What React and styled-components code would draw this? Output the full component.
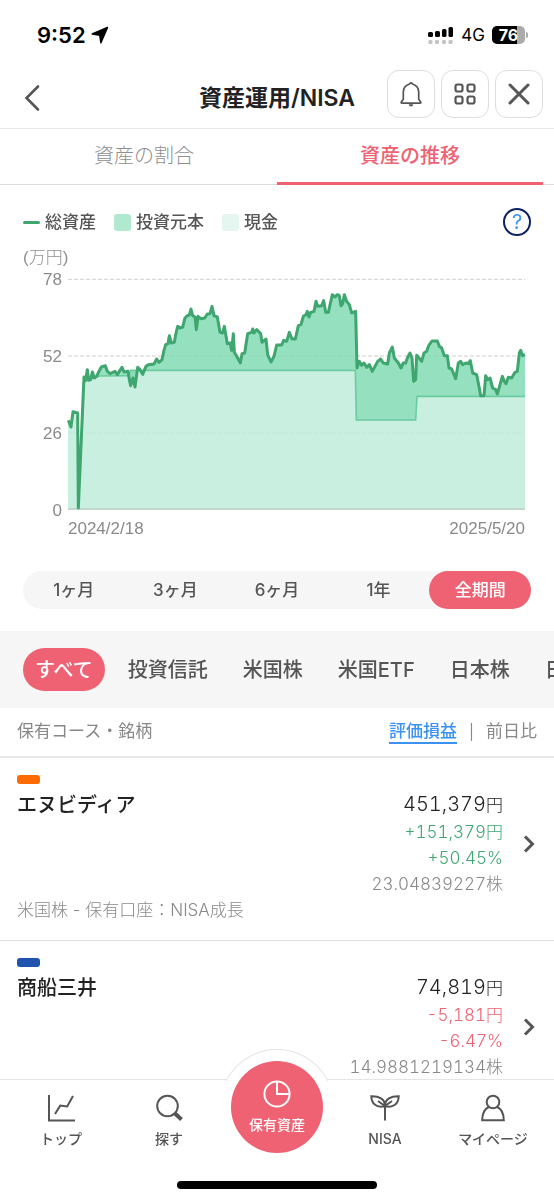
import React, { useState } from 'react';
import styled, { createGlobalStyle } from 'styled-components';

const TOTAL = [
  [1, 424], [9, 444], [15, 398], [29, 402], [31, 687], [45, 362], [48, 294], [53, 304], [58, 272], [62, 304],
  [68, 302], [73, 279], [79, 297], [86, 292], [92, 279], [100, 264], [112, 260], [118, 277], [126, 284],
  [141, 277], [148, 287], [156, 274], [162, 265], [168, 279], [180, 277], [184, 302], [188, 320], [195, 297],
  [201, 324], [206, 287], [209, 265], [216, 272], [224, 286], [234, 262], [241, 257], [258, 255], [266, 240],
  [273, 250], [282, 242], [288, 214], [293, 197], [300, 194], [304, 170], [310, 192], [319, 190], [324, 162],
  [329, 142], [336, 147], [344, 144], [351, 117], [358, 110], [364, 108], [369, 90], [374, 110], [381, 114],
  [385, 152], [390, 112], [398, 119], [410, 117], [418, 105], [426, 104], [432, 82], [438, 110], [448, 114],
  [456, 160], [464, 162], [469, 142], [478, 194], [486, 192], [491, 214], [496, 164], [499, 220], [506, 232],
  [517, 252], [522, 224], [530, 222], [539, 164], [551, 160], [554, 150], [558, 162], [566, 152], [578, 164],
  [582, 190], [594, 180], [599, 227], [609, 249], [618, 232], [626, 198], [641, 198], [647, 184], [656, 187],
  [664, 160], [672, 180], [682, 180], [691, 140], [699, 137], [706, 112], [714, 107], [718, 97], [723, 114],
  [728, 100], [738, 97], [744, 67], [749, 82], [761, 80], [767, 65], [773, 100], [781, 100], [793, 47],
  [801, 54], [808, 47], [814, 50], [819, 80], [824, 74], [829, 47], [836, 67], [844, 77], [851, 102],
  [863, 97], [867, 267], [874, 247], [881, 259], [888, 252], [896, 265], [904, 257], [913, 277], [921, 262],
  [929, 247], [938, 240], [946, 252], [959, 255], [964, 222], [973, 204], [979, 237], [991, 252], [999, 267],
  [1006, 252], [1013, 252], [1018, 237], [1026, 222], [1032, 237], [1037, 307], [1043, 302], [1046, 229],
  [1053, 237], [1061, 247], [1068, 222], [1076, 217], [1082, 200], [1092, 186], [1108, 186], [1114, 202],
  [1121, 207], [1129, 230], [1138, 230], [1143, 267], [1151, 270], [1163, 299], [1171, 252], [1178, 247],
  [1184, 257], [1194, 252], [1201, 254], [1207, 245], [1214, 282], [1226, 287], [1231, 312], [1238, 350],
  [1248, 350], [1253, 290], [1259, 302], [1266, 297], [1274, 327], [1283, 332], [1288, 345], [1296, 317],
  [1303, 292], [1309, 307], [1314, 314], [1321, 295], [1331, 297], [1341, 280], [1348, 277], [1354, 222],
  [1358, 214], [1364, 230], [1371, 227],
];

const PRINCIPAL = [
  [0, 424], [9, 444], [15, 398], [29, 402], [31, 687], [48, 304], [96, 291], [182, 290], [188, 274],
  [862, 274], [865, 423], [1043, 423], [1047, 352], [1371, 352],
];

const TICKS = [78, 52, 26, 0];
const PERIODS = ['1ヶ月', '3ヶ月', '6ヶ月', '1年', '全期間'];
const FILTERS = ['すべて', '投資信託', '米国株', '米国ETF', '日本株', '日本ETF'];

const HOLDINGS = [
  {
    name: 'エヌビディア',
    tag: '#ff6a00',
    value: '451,379',
    diff: '+151,379',
    rate: '+50.45%',
    shares: '23.04839227',
    account: '米国株 - 保有口座：NISA成長',
  },
  {
    name: '商船三井',
    tag: '#1f53ae',
    value: '74,819',
    diff: '-5,181',
    rate: '-6.47%',
    shares: '14.9881219134',
  },
];

const toPoints = (list) => list.map((p) => p.join(',')).join(' ');

const StatusBar = () => (
  <Status>
    <Clock>
      9:52
      <svg width="18" height="18" viewBox="0 0 18 18">
        <path d="M16.500 1.500 1.200 8 8.800 9.300 9.900 16.800Z" fill="#000" stroke="#000" strokeWidth="1.500" strokeLinejoin="round" />
      </svg>
    </Clock>
    <Signals>
      <svg width="26" height="18" viewBox="0 0 26 18">
        <g fill="#000">
          <rect x="0" y="6" width="5" height="5" rx="1.5" />
          <rect x="7" y="5" width="5" height="6" rx="1.5" />
          <rect x="14" y="3" width="4.5" height="8" rx="1.5" />
          <rect x="20.5" y="1" width="4.5" height="10" rx="1.5" />
        </g>
        <g fill="#c4c4c4">
          <rect x="0.5" y="14" width="4" height="4" rx="1.2" />
          <rect x="7" y="14" width="4" height="4" rx="1.2" />
          <rect x="14" y="14" width="4" height="4" rx="1.2" />
          <rect x="20.5" y="14" width="4" height="4" rx="1.2" />
        </g>
      </svg>
      <span>4G</span>
      <Battery><span>76</span></Battery>
    </Signals>
  </Status>
);

const Chart = () => (
  <ChartGrid>
    <Axis>
      {TICKS.map((t) => <span key={t}>{t}</span>)}
    </Axis>
    <Plot viewBox="0 0 1371 693" preserveAspectRatio="none" role="img" aria-label="資産の推移">
      {[1, 231, 462].map((y) => (
        <line key={y} x1="0" x2="1371" y1={y} y2={y} stroke="#cfcfcf" strokeWidth="1" strokeDasharray="4 2" />
      ))}
      <polygon points={`0,693 ${toPoints(PRINCIPAL)} 1371,693`} fill="#beecda" fillOpacity="0.85" />
      <polygon
        points={`${toPoints(TOTAL.slice(6))} ${toPoints(PRINCIPAL.slice(5).reverse())}`}
        fill="#82dbb4"
        fillOpacity="0.85"
      />
      <polyline points={toPoints(PRINCIPAL.slice(5))} stroke="#6ccba1" strokeWidth="1.6" />
      <line x1="0" x2="1371" y1="690" y2="690" stroke="#bdbdbd" strokeWidth="1" />
      <polyline points={toPoints(TOTAL)} stroke="#40a670" strokeWidth="3" strokeLinejoin="round" />
    </Plot>
    <Dates>
      <span>2024/2/18</span>
      <span>2025/5/20</span>
    </Dates>
  </ChartGrid>
);

const Holding = ({ item }) => (
  <HoldingItem>
    <HoldingLink href="#detail">
      <Tag $color={item.tag} />
      <HoldingMain>
        <Name>{item.name}</Name>
        <Values $down={item.diff.startsWith('-')}>
          <div className="value">{item.value}<small>円</small></div>
          <div>{item.diff}<small>円</small></div>
          <div>{item.rate}</div>
          <div className="shares">{item.shares}<small>株</small></div>
        </Values>
        <svg width="12" height="18" viewBox="0 0 12 18" fill="none" stroke="#555" strokeWidth="3">
          <path d="M2 1.5 9.5 9 2 16.5" />
        </svg>
      </HoldingMain>
      {item.account && <Account>{item.account}</Account>}
    </HoldingLink>
  </HoldingItem>
);

const BottomNav = () => (
  <Nav>
    <Bump />
    <NavItems>
      <NavLink href="#top">
        <svg width="28" height="28" viewBox="0 0 28 28">
          <path d="M2 1v25.5h26M8 20l5.2-8.4 7 .9L26 2" />
        </svg>
        トップ
      </NavLink>
      <NavLink href="#search">
        <svg width="28" height="28" viewBox="0 0 28 28">
          <circle cx="12.5" cy="12" r="10.3" />
          <path d="m20 19.5 6.5 6" strokeWidth="4" />
        </svg>
        探す
      </NavLink>
      <CenterLink href="#assets">
        <svg width="28" height="28" viewBox="0 0 28 28">
          <circle cx="14" cy="14" r="12.6" />
          <path d="M14 1.4V14h12.6" />
        </svg>
        保有資産
      </CenterLink>
      <NavLink href="#nisa">
        <svg width="30" height="28" viewBox="0 0 30 28">
          <path d="M15 12v14.5M15 12C15 5 9 2 1.3 2.2 1.5 9.5 6.5 14.5 15 12ZM15 12c0-7 6-10 13.7-9.8C28.5 9.5 23.5 14.5 15 12ZM8 7l7 5 7-5" />
        </svg>
        NISA
      </NavLink>
      <NavLink href="#mypage">
        <svg width="28" height="28" viewBox="0 0 28 28">
          <circle cx="14" cy="8" r="6.3" />
          <path d="M9.8 13C5.5 15 3.2 19 3.2 26.3h21.6C24.8 19 22.5 15 18.2 13" />
        </svg>
        マイページ
      </NavLink>
    </NavItems>
    <HomeIndicator />
  </Nav>
);

const App = () => {
  const [tab, setTab] = useState(1);
  const [period, setPeriod] = useState('全期間');
  const [filter, setFilter] = useState('すべて');

  return (
    <>
      <GlobalStyle />
      <Screen>
        <StatusBar />
        <Header>
          <BackButton aria-label="戻る">
            <svg width="16" height="28" viewBox="0 0 16 28" fill="none" stroke="#555" strokeWidth="2.6" strokeLinecap="round">
              <path d="M14 2.5 2.5 14 14 25.5" />
            </svg>
          </BackButton>
          <h1>資産運用/NISA</h1>
          <Actions>
            <SquareButton aria-label="お知らせ">
              <svg width="24" height="26" viewBox="0 0 24 26" strokeWidth="1.7">
                <path d="M12 1.8c.9 0 1.2.8 1.6 1.2 3.6 1.2 6.1 3.9 6.1 8v7.2l2 2.8c.4.7.1 1.2-.7 1.2H3c-.8 0-1.1-.5-.7-1.2l2-2.8V11c0-4.1 2.5-6.8 6.1-8 .4-.4.7-1.2 1.6-1.2Z" />
                <path d="M10.2 23.8c.5 1.6 3.1 1.6 3.6 0Z" fill="#555" strokeWidth="1" />
              </svg>
            </SquareButton>
            <SquareButton aria-label="メニュー">
              <svg width="22" height="22" viewBox="0 0 22 22" strokeWidth="2.2">
                <rect x="1.5" y="1.5" width="7" height="7" rx="2" />
                <rect x="13.5" y="1.5" width="7" height="7" rx="2" />
                <rect x="1.5" y="13.5" width="7" height="7" rx="2" />
                <rect x="13.5" y="13.5" width="7" height="7" rx="2" />
              </svg>
            </SquareButton>
            <SquareButton aria-label="閉じる">
              <svg width="22" height="22" viewBox="0 0 22 22" strokeWidth="3" strokeLinecap="round">
                <path d="m2 2 18 18M20 2 2 20" />
              </svg>
            </SquareButton>
          </Actions>
        </Header>
        <Tabs>
          {['資産の割合', '資産の推移'].map((label, i) => (
            <Tab key={label} $active={tab === i} onClick={() => setTab(i)}>{label}</Tab>
          ))}
        </Tabs>
        <Content>
          <ChartSection>
            <LegendRow>
              <Legend><LineMark /><span>総資産</span></Legend>
              <Legend><Swatch $color="#b0e9d0" /><span>投資元本</span></Legend>
              <Legend><Swatch $color="#e4f6ef" /><span>現金</span></Legend>
              <HelpButton aria-label="ヘルプ">?</HelpButton>
            </LegendRow>
            <Unit>(万円)</Unit>
            <Chart />
            <Periods>
              {PERIODS.map((p) => (
                <PeriodButton key={p} $active={p === period} onClick={() => setPeriod(p)}>{p}</PeriodButton>
              ))}
            </Periods>
          </ChartSection>
          <Filters>
            {FILTERS.map((f) => (
              <FilterButton key={f} $active={f === filter} onClick={() => setFilter(f)}>{f}</FilterButton>
            ))}
          </Filters>
          <ListHead>
            <span>保有コース・銘柄</span>
            <Sorts>
              <SortButton $active>評価損益</SortButton>
              <Divider>|</Divider>
              <SortButton>前日比</SortButton>
            </Sorts>
          </ListHead>
          <HoldingList>
            {HOLDINGS.map((item) => <Holding key={item.name} item={item} />)}
          </HoldingList>
        </Content>
        <BottomNav />
      </Screen>
    </>
  );
};

export default App;

const GlobalStyle = createGlobalStyle`
  * {
    box-sizing: border-box;
  }
  body {
    margin: 0;
    background: #fff;
    color: #222;
    font-family: Inter, 'Noto Sans CJK JP', sans-serif;
  }
  button {
    border: 0;
    padding: 0;
    background: none;
    color: inherit;
    font: inherit;
    cursor: pointer;
  }
  a {
    color: inherit;
    text-decoration: none;
  }
  svg {
    display: block;
    flex-shrink: 0;
  }
`;

const Screen = styled.div`
  display: flex;
  flex-direction: column;
  height: 100vh;
`;

const Status = styled.div`
  flex-shrink: 0;
  height: 70px;
  padding: 0 29px 0 37px;
  display: flex;
  justify-content: space-between;
  align-items: center;
  color: #000;
`;

const Clock = styled.div`
  display: flex;
  align-items: center;
  gap: 5px;
  font-size: 22px;
  font-weight: 600;
`;

const Signals = styled.div`
  display: flex;
  align-items: center;
  gap: 7px;
  font-size: 17px;
`;

const Battery = styled.div`
  position: relative;
  width: 33px;
  height: 18px;
  border-radius: 5px;
  background: linear-gradient(to right, #000 76%, #ababab 76%);
  color: #fff;
  font-size: 16px;
  font-weight: 700;
  line-height: 18px;
  text-align: center;
  &::after {
    content: '';
    position: absolute;
    top: 6px;
    right: -3px;
    width: 2px;
    height: 6px;
    border-radius: 0 2px 2px 0;
    background: #ababab;
  }
`;

const Header = styled.header`
  flex-shrink: 0;
  height: 59px;
  padding: 0 11px 10px;
  display: grid;
  grid-template-columns: 1fr auto 1fr;
  align-items: center;
  border-bottom: 1px solid #e9e9e9;
  h1 {
    margin: 0;
    padding-top: 8px;
    font-size: 23px;
    font-weight: 600;
    line-height: 32px;
  }
`;

const BackButton = styled.button`
  justify-self: start;
  padding: 8px 13px 0;
`;

const Actions = styled.div`
  justify-self: end;
  display: flex;
  gap: 6px;
`;

const SquareButton = styled.button`
  width: 48px;
  height: 48px;
  display: flex;
  align-items: center;
  justify-content: center;
  border: 1px solid #dedede;
  border-radius: 12px;
  svg {
    fill: none;
    stroke: #555;
  }
`;

const Tabs = styled.div`
  flex-shrink: 0;
  display: flex;
  height: 56px;
  padding: 0 11px;
  box-shadow: inset 0 -1px #dcdcdc;
`;

const Tab = styled.button`
  flex: 1;
  padding-bottom: 3px;
  border-bottom: 3px solid ${(p) => (p.$active ? '#ee6273' : 'transparent')};
  color: ${(p) => (p.$active ? '#ee6273' : '#8f8f8f')};
  font-size: 20px;
  font-weight: ${(p) => (p.$active ? 500 : 300)};
`;

const Content = styled.main`
  flex: 1;
  min-height: 0;
  overflow-x: hidden;
  overflow-y: auto;
  scrollbar-width: none;
`;

const ChartSection = styled.section`
  padding: 22px 23px;
`;

const LegendRow = styled.div`
  display: flex;
  align-items: center;
  gap: 18px;
  height: 30px;
  color: #555;
  font-size: 17px;
  font-weight: 500;
`;

const Legend = styled.div`
  display: flex;
  align-items: center;
  gap: 5px;
  height: 30px;
  span:last-child {
    padding-bottom: 4px;
  }
`;

const LineMark = styled.span`
  width: 17px;
  height: 3px;
  border-radius: 2px;
  background: #40a670;
`;

const Swatch = styled.span`
  width: 17px;
  height: 17px;
  border-radius: 3px;
  background: ${(p) => p.$color};
`;

const HelpButton = styled.button`
  width: 28px;
  height: 28px;
  margin-left: auto;
  border: 2px solid #0b2161;
  border-radius: 50%;
  color: #3c92f3;
  font-size: 20px;
  font-weight: 400;
  line-height: 24px;
`;

const Unit = styled.div`
  margin-top: 11px;
  color: #8f8f8f;
  font-family: 'Liberation Sans', 'Noto Sans CJK JP', sans-serif;
  font-size: 17px;
  font-weight: 300;
  line-height: 20px;
`;

const ChartGrid = styled.div`
  display: grid;
  grid-template-columns: 39px 1fr;
  column-gap: 6px;
  padding: 11px 6px 0 0;
  color: #8a8a8a;
  font-family: 'Liberation Sans', sans-serif;
  font-size: 17px;
  line-height: 20px;
`;

const Axis = styled.div`
  display: flex;
  flex-direction: column;
  justify-content: space-between;
  margin: -9px 0 -11px;
  text-align: right;
`;

const Plot = styled.svg`
  width: 100%;
  height: 231px;
  overflow: visible;
  line,
  polyline {
    fill: none;
    vector-effect: non-scaling-stroke;
  }
`;

const Dates = styled.div`
  grid-column: 2;
  display: flex;
  justify-content: space-between;
  padding-top: 9px;
`;

const Periods = styled.div`
  display: flex;
  height: 38px;
  margin-top: 32px;
  border-radius: 19px;
  background: #f6f6f6;
`;

const PeriodButton = styled.button`
  flex: 1;
  padding-bottom: 4px;
  border-radius: 19px;
  background: ${(p) => (p.$active ? '#ee6273' : 'transparent')};
  color: ${(p) => (p.$active ? '#fff' : '#555')};
  font-size: 17px;
  font-weight: 500;
`;

const Filters = styled.div`
  display: flex;
  gap: 11px;
  padding: 17px 23px;
  background: #f6f6f6;
  overflow-x: auto;
  scrollbar-width: none;
`;

const FilterButton = styled.button`
  flex-shrink: 0;
  height: 43px;
  padding: 0 12px 2px;
  border-radius: 22px;
  background: ${(p) => (p.$active ? '#ee6273' : 'transparent')};
  color: ${(p) => (p.$active ? '#fff' : '#555')};
  font-size: 20px;
  font-weight: 500;
`;

const ListHead = styled.div`
  display: flex;
  justify-content: space-between;
  align-items: center;
  height: 50px;
  padding: 0 17px;
  border-bottom: 2px solid #e9e9e9;
  color: #888;
  font-size: 17px;
  line-height: 22px;
  & > span {
    padding-bottom: 2px;
  }
`;

const Sorts = styled.div`
  display: flex;
  align-items: center;
  gap: 12px;
`;

const Divider = styled.span`
  font-size: 15px;
`;

const SortButton = styled.button`
  border-bottom: 2px solid ${(p) => (p.$active ? '#3c92f3' : 'transparent')};
  color: ${(p) => (p.$active ? '#3c92f3' : '#888')};
  font-weight: ${(p) => (p.$active ? 500 : 400)};
  line-height: 22px;
`;

const HoldingList = styled.ul`
  margin: 0;
  padding: 0;
  list-style: none;
`;

const HoldingItem = styled.li`
  border-bottom: 1px solid #dedede;
  &:last-child {
    border-bottom: 0;
  }
`;

const HoldingLink = styled.a`
  display: block;
  padding: 17px 19px 20px 17px;
`;

const Tag = styled.div`
  width: 23px;
  height: 9px;
  border-radius: 3px;
  background: ${(p) => p.$color};
`;

const HoldingMain = styled.div`
  display: flex;
  align-items: center;
  gap: 20px;
  padding: 6px 0 3px;
`;

const Name = styled.div`
  flex: 1;
  align-self: flex-start;
  font-size: 20px;
  font-weight: 500;
  line-height: 30px;
`;

const Values = styled.div`
  color: ${(p) => (p.$down ? '#ee6273' : '#40a670')};
  font-size: 17px;
  font-weight: 300;
  font-variant-numeric: tabular-nums;
  line-height: 26px;
  text-align: right;
  small {
    font-size: 17px;
  }
  .value {
    color: #222;
    font-size: 20px;
    line-height: 28px;
  }
  .shares {
    color: #888;
  }
`;

const Account = styled.div`
  color: #888;
  font-size: 17px;
  font-weight: 300;
  line-height: 20px;
`;

const Nav = styled.nav`
  position: relative;
  flex-shrink: 0;
  border-top: 1px solid #e4e4e4;
  background: #fff;
`;

const Bump = styled.div`
  position: absolute;
  bottom: 100%;
  left: 50%;
  width: 116px;
  height: 32px;
  margin-bottom: -1px;
  transform: translateX(-50%);
  overflow: hidden;
  &::before {
    content: '';
    display: block;
    height: 116px;
    border: 1px solid #e4e4e4;
    border-radius: 50%;
    background: #fff;
  }
`;

const NavItems = styled.div`
  position: relative;
  display: grid;
  grid-template-columns: repeat(5, 1fr);
  padding: 14px 7px 0;
  color: #555;
  font-size: 14px;
  font-weight: 500;
  line-height: 20px;
  svg {
    fill: none;
    stroke: currentColor;
    stroke-width: 2;
  }
`;

const NavLink = styled.a`
  display: flex;
  flex-direction: column;
  align-items: center;
  gap: 7px;
`;

const CenterLink = styled.a`
  justify-self: center;
  width: 92px;
  height: 92px;
  margin-top: -33px;
  padding-top: 19px;
  display: flex;
  flex-direction: column;
  align-items: center;
  gap: 7px;
  border-radius: 50%;
  background: #ee6273;
  color: #fff;
`;

const HomeIndicator = styled.div`
  width: 36%;
  height: 8px;
  margin: 28px auto 11px;
  border-radius: 4px;
  background: #000;
`;
